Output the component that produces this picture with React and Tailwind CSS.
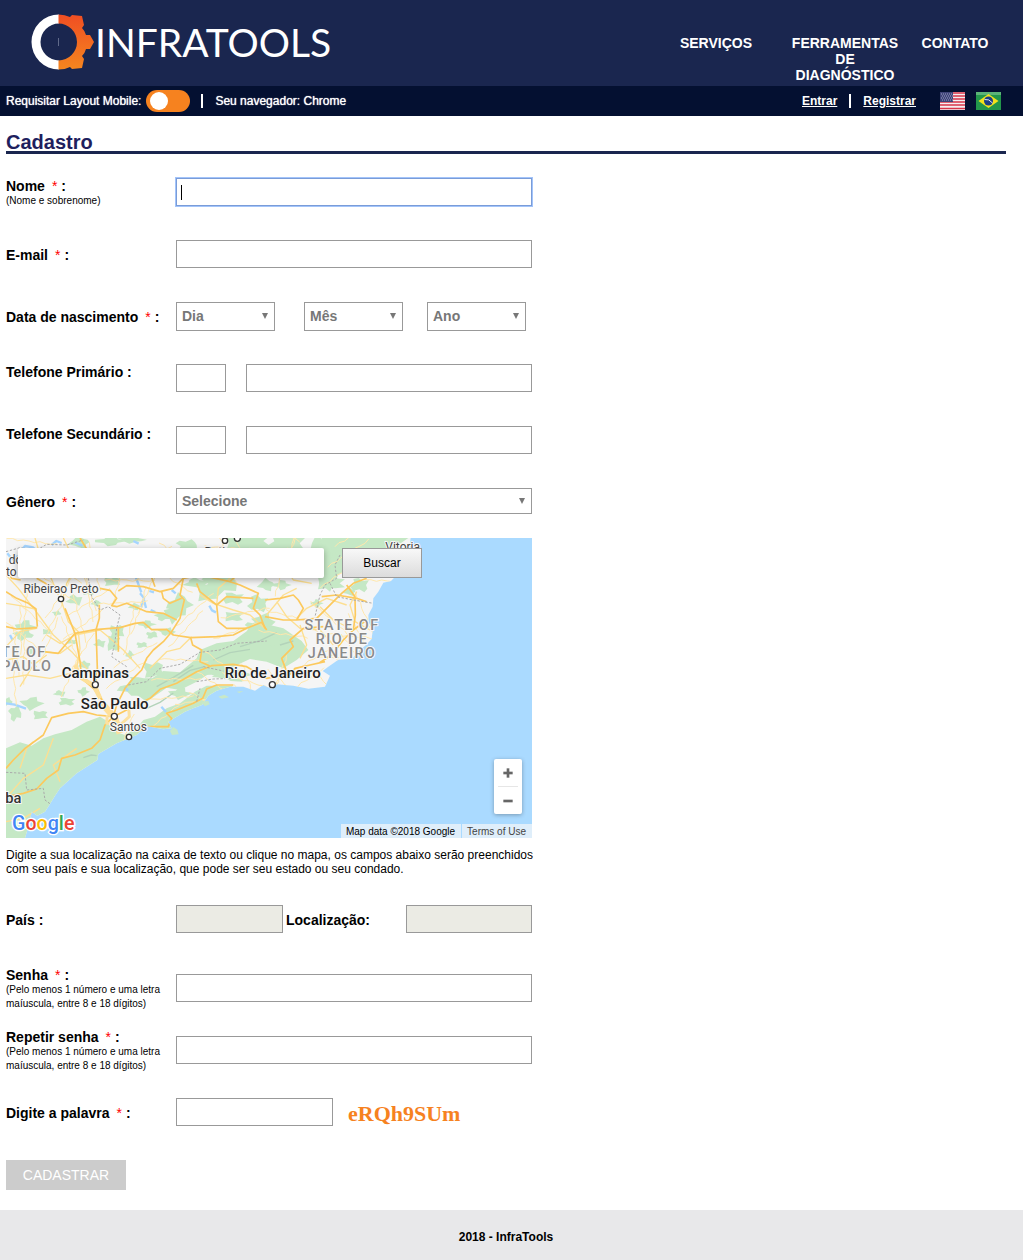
import { Minus, Plus } from "lucide-react";

const FONT = "font-['Liberation_Sans',Arial,sans-serif]";
const FIELD = "h-7 min-w-0 rounded-none border border-[#999] bg-white px-1 text-sm outline-none";

function Logo() {
  return (
    <a href="#inicio" aria-label="InfraTools" className="flex items-center text-white">
      <svg viewBox="0 0 64 56" className="h-14 w-16 shrink-0" aria-hidden="true">
        <defs>
          <linearGradient id="gear" x1="0" y1="0" x2="0" y2="1">
            <stop offset="0" stopColor="#f04e23" />
            <stop offset="1" stopColor="#f6861f" />
          </linearGradient>
        </defs>
        <path d="M28 .5A27.5 27.5 0 0 0 28 55.500V46.500A18.500 18.500 0 0 1 28 9.500Z" fill="#fff" />
        <path
          d="M27.500 .5Q34 .5 39 3L41 1L51 2L53 11L51 14Q54 17 55 21L59 21L63 28L59 35L55 35Q54 39 51 42L53 45L51 54L41 55L39 53Q34 55.500 27.500 55.500V46.500A18.500 18.500 0 0 0 27.500 9.500Z"
          fill="url(#gear)"
        />
        <path d="M27.500 24v8" stroke="#8088a3" strokeWidth=".7" />
      </svg>
      <span className="font-[Lato,sans-serif] text-[39px] leading-none">INFRATOOLS</span>
    </a>
  );
}

function UsFlag() {
  return (
    <svg viewBox="0 0 25 18" className="h-[18px] w-[25px]" aria-hidden="true">
      <path d="M0 0h25v18H0z" fill="#f5eef0" />
      <path d="M0 1h25M0 4h25M0 7h25M0 10h25M0 13h25M0 16.500h25" stroke="#d8344a" strokeWidth="1.500" />
      <path d="M0 0h13v10H0z" fill="#3f4378" />
      <path d="M1 2h11M2 4h11M1 6h11M2 8h11" stroke="#9ea3c4" strokeDasharray="1 1" />
    </svg>
  );
}

function BrFlag() {
  return (
    <svg viewBox="0 0 25 18" className="h-[18px] w-[25px]" aria-hidden="true">
      <path d="M0 0h25v18H0z" fill="#22964b" />
      <path d="M0 0h25v3H0z" fill="#5bb377" />
      <path d="M12.500 2L22.500 9L12.500 16L2.500 9Z" fill="#f4e21b" />
      <circle cx="12.500" cy="9" r="4.500" fill="#1d3f86" />
      <path d="M8.500 7.500Q13 6.500 16.500 11" stroke="#dbe5f0" fill="none" />
    </svg>
  );
}

const forests = [
  [240, 22, 50, 28], [330, 18, 70, 22], [395, 14, 60, 16], [560, 30, 50, 26], [740, 18, 120, 50], [860, 25, 100, 60],
  [960, 60, 70, 90], [1020, 20, 90, 60], [1120, 70, 60, 60], [660, 145, 80, 60], [620, 170, 50, 50], [700, 190, 50, 30],
  [590, 145, 60, 24], [540, 210, 60, 50], [520, 235, 40, 44], [490, 245, 40, 20], [335, 140, 40, 22], [265, 170, 30, 18],
  [225, 195, 40, 24], [290, 205, 26, 14], [75, 275, 44, 30], [70, 300, 46, 24], [350, 290, 36, 34], [340, 325, 32, 40],
  [300, 325, 30, 18], [405, 215, 30, 16], [440, 268, 40, 18], [500, 290, 38, 18], [455, 300, 28, 18], [700, 245, 46, 24],
  [775, 205, 50, 40], [800, 150, 40, 28], [845, 150, 40, 22], [790, 260, 50, 40], [760, 275, 40, 26], [990, 145, 70, 30],
  [1080, 150, 44, 34], [1050, 170, 28, 18], [950, 205, 28, 18], [820, 320, 40, 20], [90, 350, 20, 18], [140, 290, 22, 14],
  [215, 320, 26, 12], [255, 390, 30, 18], [390, 360, 20, 20], [95, 505, 50, 30], [45, 535, 30, 36], [120, 540, 36, 22],
  [200, 500, 40, 20], [180, 475, 30, 14], [400, 460, 70, 34], [540, 475, 50, 26], [20, 500, 26, 20], [460, 405, 50, 40],
  [420, 440, 60, 24], [640, 400, 90, 46], [700, 420, 90, 30], [250, 470, 26, 20], [170, 235, 20, 12], [425, 330, 26, 14],
];

function blob([x, y, w, h], i) {
  const points = [];
  for (let k = 0; k < 11; k += 1) {
    const angle = (k / 11) * Math.PI * 2;
    const r = 0.58 + 0.2 * Math.sin(i * 7.3 + k * 4.1);
    points.push(`${Math.round(x + w * r * Math.cos(angle))},${Math.round(y + h * r * Math.sin(angle))}`);
  }
  return points.join(" ");
}

function lanes() {
  const lines = [];
  for (let i = 0; i < 80; i += 1) {
    let x = 20 + ((i * 197) % 1120);
    let y = 10 + ((i * 113) % 540);
    let angle = i * 2.4;
    let d = `M${x} ${y}`;
    for (let k = 0; k < 9; k += 1) {
      angle += Math.sin(i * 3.7 + k * 2.3) * 0.55;
      x += Math.round(Math.cos(angle) * 17);
      y += Math.round(Math.sin(angle) * 17);
      d += `L${x} ${y}`;
    }
    lines.push(d);
  }
  return lines.join("");
}

const LAND =
  "M18 9H1232L1225 60L1200 110L1173 138L1150 143L1135 170L1120 190L1118 215L1105 240L1106 262L1118 285L1115 312L1098 330L1080 345L1055 372L1015 374L985 395L968 408L990 422L975 455L925 461L880 452L830 448L815 462L790 450L765 467L730 455L690 455L650 467L625 482L606 510L580 520L555 530L505 560L515 580L490 583L440 573L410 600L350 625L295 657L292 675L230 715L180 760L165 782L148 810L135 830L112 842L95 830L88 865L75 909H18Z";

const places = [
  ["Ribeirao Preto", 183, 173, 183, 192, false],
  ["Campinas", 286, 430, 286, 449, true],
  ["Rio de Janeiro", 818, 430, 817, 449, true],
  ["São Paulo", 344, 523, 343, 544, true],
  ["Santos", 385, 588, 387, 606, false],
];

function MapDrawing() {
  return (
    <svg
      viewBox="18 9 1578 900"
      preserveAspectRatio="xMinYMin slice"
      className="block h-full w-full bg-[#aadaff] font-[Roboto,sans-serif]"
      role="img"
      aria-label="Mapa do sudeste do Brasil"
    >
      <defs>
        <clipPath id="land"><path d={LAND} /></clipPath>
      </defs>
      <path d={LAND} fill="#f5f5f5" />
      <g clipPath="url(#land)" fill="none" strokeLinejoin="round">
        <g fill="#c5e8c5">
          <path d="M18 640L60 622L95 632L130 610L165 598L215 585L260 560L300 545L325 560L345 590L375 600L410 580L430 555L465 545L500 520L540 505L585 470L620 452L700 452L640 500L520 620L300 700L120 909H18Z" />
          <path d="M390 465L440 440L490 408L540 412L590 370L600 345L650 325L700 318L745 285L800 268L850 280L905 318L925 345L890 375L850 400L800 380L750 372L690 400L640 408L590 440L540 465L500 458L440 500Z" />
          <path d="M955 15L1030 9L1225 9L1150 60L1100 40L1060 90L1015 120L990 170L965 150L975 90Z" />
          {forests.map((f, i) => <polygon key={i} points={blob(f, i)} />)}
        </g>
        <g stroke="#b3d3ba" strokeWidth="4">
          <path d="M470 455l50-28 60-36M520 440l50-34 40-10M640 375l50-22 60-10M720 335l60-18 50-24M250 668l24-8 16 2M440 520l40-18 40-28M840 330l40-12" />
        </g>
        <g stroke="#a5d5ff" strokeWidth="7">
          <path d="M22 55l14 18 18-10M65 45l10-12 24 4 12 12M155 30l14-12 16 6M225 22l22 10M408 128l8 22 8 22M420 175l12 14-8 28M432 195l6 24M448 168l14 4M515 165l12 10M628 212l8 14 12 6M18 505l26 4 34 12M452 225l14 6M484 515l14 16M400 18l16 8M30 300l8 16M374 455l10 12" />
        </g>
        <path d={lanes()} stroke="#ffe7ac" strokeWidth="3" />
        <g stroke="#fddf91" strokeWidth="4">
          <path d="M18 120L55 160L85 200L105 225L160 300L215 350L260 400L286 445L305 490L340 545M18 205L60 212L105 222M18 335L60 290L110 280M185 200L205 260L235 290L240 340L230 400M190 9L215 60L225 100L200 145L190 185M105 9L120 60L145 110L175 180" />
          <path d="M140 300L180 325L225 300L300 285M300 285L330 310L370 345L420 400M130 350L180 355L215 330M18 430L80 420L150 430L210 415L260 440M60 455L100 390L140 360M18 375L70 365L110 395M650 210L655 160L690 130M575 305L540 340L500 350L450 400M600 180L640 205L700 225L750 240L800 285" />
          <path d="M830 200L860 245L900 280L960 285L1000 330M890 250L920 220L980 190L1040 210M800 240L850 180L890 160M1070 170L1050 210L1065 260L1110 285M900 270L920 330L900 370M845 80L880 135L935 145M1060 285L1000 255L960 215M18 790L70 730L130 690L160 610M60 700L80 640L100 620M180 740L160 690L230 640M18 860L70 850L120 820" />
        </g>
        <g stroke="#fcc95d" strokeWidth="5">
          <path d="M18 170L50 190L85 205L108 222L112 275M18 275L50 282L112 278M62 135L35 130L20 105M110 130L145 150L170 155M300 160L330 166L350 190L335 212L350 215L380 205L440 230L490 235L530 255M355 168L380 152L430 155L480 170L520 160L550 130M240 9L265 50L300 75M300 75L360 80L420 60M550 130L600 120L650 100M485 170L490 190L510 205L545 190" />
          <path d="M130 350L175 355L225 295L285 284L360 278L405 265L430 262L455 284L500 283L520 300L572 308L650 305L700 300L740 280L785 262L800 285M298 210L298 250L288 284L290 340L292 400L286 449M355 278L355 350M550 130L540 180L553 195L540 250L515 290L490 320L460 345L440 370L425 405L400 430L375 460L350 510L340 545" />
          <path d="M340 545L310 500L280 460L245 430L240 380L225 295L195 220M340 545L290 540L250 530L205 535L155 548L130 600L75 640L40 675L18 700M340 545L315 570L300 615L275 640L225 660L185 670L175 705L140 730L110 762L70 775L18 785" />
          <path d="M340 545L390 520L450 490L480 463L530 445L590 410L635 392L700 388L740 395L800 430L850 420L900 410M572 308L578 330L605 345L600 380L630 393M410 590L440 575L505 575L515 550L500 535L530 525L580 505L608 490L620 462L650 450L700 450M795 280L780 240L760 220L775 175L720 150L690 140" />
          <path d="M795 245L850 255L890 255L910 220L895 195L880 180L840 190L795 195M890 255L950 250L1000 200L1025 175L1060 145L1100 130M860 410L845 370L880 335L870 315L910 280L970 275M955 385L995 360L1030 315L1060 285L1066 240L1065 185L1040 150M1060 285L1100 255M860 430L885 400L930 390L975 380M965 185L1010 180L1070 190L1100 200" />
          <path d="M590 145L600 170L650 210L680 185L760 190M650 210L655 260L680 280L740 280M445 100L465 155M600 120L690 140L720 110L790 115" />
        </g>
        <path d="M300 500Q320 520 345 550L360 595" stroke="#ffe09a" strokeWidth="20" />
        <path d="M360 520L385 505L388 545L360 570L320 565L322 540" stroke="#fce1a0" strokeWidth="9" />
        <path d="M225 390L245 430L280 450L300 490" stroke="#fee09a" strokeWidth="12" />
        <g stroke="#aaa" strokeWidth="3" strokeDasharray="7 5">
          <path d="M18 50L60 38L105 48L140 28L200 30L250 15M265 130L275 185L300 225L325 215L360 240L350 280L345 320L335 365L380 395M385 450L440 440L480 400L540 388L600 352L660 345L710 325L800 318M610 395L670 408M590 440L640 432L700 430M1020 60L1005 90L1010 130L975 150L960 180L945 245M990 145L1010 185L1060 195L1120 205M18 712L75 715L80 765L130 760L135 795L155 810M590 500L600 460" />
        </g>
      </g>
      <path d="M510 588l10-12 12 8 4 14-20 2zM603 500l22-2 4 10-14 6zM655 485l18-6 14 8-22 4zM710 470l20-2-12 6z" fill="#c8e8c8" />

      <g stroke="#f8f8f8" strokeWidth="6" strokeLinejoin="round" className="[paint-order:stroke]">
        <g fill="#8a8a8a" fontSize="43" fontWeight="500" className="tracking-widest">
          <text x="1026" y="284" textAnchor="middle">STATE OF</text>
          <text x="1026" y="326" textAnchor="middle">RIO DE</text>
          <text x="1026" y="368" textAnchor="middle">JANEIRO</text>
          <text x="140" y="366" textAnchor="end">TE OF</text>
          <text x="157" y="408" textAnchor="end">PAULO</text>
        </g>
        <g fill="#444" fontSize="36">
          <text x="26" y="87">do</text>
          <text x="18" y="123">to</text>
          <text x="660" y="62" textAnchor="middle">Betim</text>
          <text x="1208" y="48" textAnchor="middle">Vitoria</text>
        </g>
        <text x="16" y="804" fill="#333" fontSize="44" fontWeight="500">ba</text>
        {places.map(([name, x, y, , , major]) => (
          <text key={name} x={x} y={y} textAnchor="middle" fill={major ? "#222" : "#444"} fontSize={major ? 45 : 36} fontWeight={major ? 500 : 400}>
            {name}
          </text>
        ))}
      </g>
      <g fill="#fff" stroke="#333" strokeWidth="4">
        {places.map(([name, , , cx, cy, major]) => <circle key={name} cx={cx} cy={cy} r={major ? 9 : 8} />)}
        <circle cx="675" cy="17" r="8" />
        <circle cx="712" cy="10" r="9" />
      </g>
      <text x="36" y="886" fontSize="59" fontWeight="500" stroke="#fff" strokeWidth="8" className="[paint-order:stroke]">
        <tspan fill="#4285f4">G</tspan><tspan fill="#ea4335">o</tspan><tspan fill="#fbbc05">o</tspan>
        <tspan fill="#4285f4">g</tspan><tspan fill="#34a853">l</tspan><tspan fill="#ea4335">e</tspan>
      </text>
    </svg>
  );
}

function LocationMap() {
  return (
    <div className="relative mt-[7px] h-[300px] w-full overflow-hidden">
      <MapDrawing />
      <input
        type="text"
        aria-label="Buscar localização"
        className="absolute left-3 top-[10px] h-[30px] w-[306px] rounded-[2px] bg-white px-3 text-sm shadow-[0_2px_6px_rgba(0,0,0,0.3)] outline-none"
      />
      <button type="button" className="absolute left-[336px] top-[10px] h-[30px] w-20 border border-[#999] bg-linear-to-b from-[#f8f8f8] to-[#dcdcdc] text-xs text-black">
        Buscar
      </button>
      <div className="absolute bottom-6 right-[10px] flex w-7 flex-col items-center rounded-[2px] bg-white text-[#666] shadow-[0_1px_4px_rgba(0,0,0,0.3)]">
        <button type="button" aria-label="Aumentar zoom" className="flex h-[27px] w-7 items-center justify-center">
          <Plus size={16} strokeWidth={4} strokeLinecap="butt" />
        </button>
        <span className="h-px w-5 bg-[#e6e6e6]" />
        <button type="button" aria-label="Diminuir zoom" className="flex h-[27px] w-7 items-center justify-center">
          <Minus size={16} strokeWidth={4} strokeLinecap="butt" />
        </button>
      </div>
      <div className="absolute bottom-0 right-0 flex h-[14px] gap-px text-[10px] leading-4">
        <span className="bg-[#dfeefa] pl-[5px] pr-[6px] text-black">Map data ©2018 Google</span>
        <a href="#termos" className="bg-[#dfeefa] pl-[5px] pr-[6px] text-[#444]">Terms of Use</a>
      </div>
    </div>
  );
}

function FieldLabel({ htmlFor, children, required, hint, raised }) {
  return (
    <div className={raised ? "w-[170px] shrink-0 pb-3" : "w-[170px] shrink-0 pt-[2px]"}>
      <label htmlFor={htmlFor} className="block text-sm leading-4 font-bold">
        {children}
        {required && <span className="ml-[7px] mr-1 font-normal text-[#ff0000]">*</span>}
        {required ? ":" : " :"}
      </label>
      {hint && <p id={`${htmlFor}-hint`} className="max-w-40 text-[10px] leading-[14px]">{hint}</p>}
    </div>
  );
}

function Row({ children }) {
  return <div className="flex min-h-[62px] items-center">{children}</div>;
}

function Dropdown({ id, label, placeholder, options, size }) {
  return (
    <div className={`relative ${size}`}>
      <select
        id={id}
        aria-label={label}
        defaultValue=""
        className="h-full w-full appearance-none rounded-none border border-[#999] bg-white pl-[5px] pr-5 text-sm font-bold text-[#777] outline-none"
      >
        <option value="">{placeholder}</option>
        {options.map((o) => <option key={o}>{o}</option>)}
      </select>
      <svg viewBox="0 0 6 6" className="pointer-events-none absolute right-[7px] top-1/2 size-[6px] -translate-y-1/2" aria-hidden="true">
        <path d="M0 0h6L3 6Z" fill="#777" />
      </svg>
    </div>
  );
}

const days = Array.from({ length: 31 }, (_, i) => i + 1);
const months = ["Janeiro", "Fevereiro", "Março", "Abril", "Maio", "Junho", "Julho", "Agosto", "Setembro", "Outubro", "Novembro", "Dezembro"];
const years = Array.from({ length: 100 }, (_, i) => 2018 - i);
const passwordHint = "(Pelo menos 1 número e uma letra maíuscula, entre 8 e 18 dígitos)";

export default function App() {
  return (
    <div className={`min-h-screen bg-white text-black ${FONT}`}>
      <header>
        <div className="flex h-[86px] items-start justify-between bg-[#1a264f] pl-[31px] pr-[13px] text-white">
          <div className="pt-[14px]"><Logo /></div>
          <nav className="flex pt-[35px] text-center text-sm leading-4 font-bold">
            <a href="#servicos" className="w-[148px] px-4">SERVIÇOS</a>
            <a href="#ferramentas" className="w-[110px]">FERRAMENTAS DE DIAGNÓSTICO</a>
            <a href="#contato" className="w-[110px]">CONTATO</a>
          </nav>
        </div>
        <div className="flex h-[30px] items-center justify-between bg-[#041031] pl-[6px] pr-[22px] text-xs text-white">
          <div className="flex items-center [text-shadow:0_0_1px_#fff]">
            <label htmlFor="mobile">Requisitar Layout Mobile:</label>
            <input
              id="mobile"
              type="checkbox"
              role="switch"
              className="ml-[5px] flex h-[22px] w-11 appearance-none items-center rounded-full bg-[#f6821f] px-1 before:size-[18px] before:rounded-full before:bg-white checked:justify-end"
            />
            <span className="ml-[11px] mr-3 h-[14px] w-[2px] bg-white" />
            <span>Seu navegador: Chrome</span>
          </div>
          <div className="flex items-center">
            <a href="#entrar" className="font-bold underline">Entrar</a>
            <span className="mx-3 h-[14px] w-[2px] bg-white" />
            <a href="#registrar" className="font-bold underline">Registrar</a>
            <button type="button" aria-label="English" className="ml-6"><UsFlag /></button>
            <button type="button" aria-label="Português" className="ml-[11px]"><BrFlag /></button>
          </div>
        </div>
      </header>

      <main className="pl-[6px] pr-[17px] pt-[17px]">
        <h1 className="border-b-[3px] border-[#1a264f] text-xl leading-[18px] font-bold text-[#1f1f5e]">Cadastro</h1>

        <form className="mt-[7px] max-w-[526px]" onSubmit={(e) => e.preventDefault()}>
          <Row>
            <FieldLabel htmlFor="nome" required hint="(Nome e sobrenome)">Nome</FieldLabel>
            <div className="relative flex-1">
              <input
                id="nome"
                type="text"
                aria-describedby="nome-hint"
                className="peer block h-7 w-full border border-[#7a9cd8] bg-white px-1 text-sm ring-1 ring-[#a3c4fa] outline-none"
              />
              <span className="pointer-events-none absolute left-[5px] top-[7px] h-[15px] w-px bg-black peer-focus:hidden" />
            </div>
          </Row>
          <Row>
            <FieldLabel htmlFor="email" required>E-mail</FieldLabel>
            <input id="email" type="email" className={`${FIELD} flex-1`} />
          </Row>
          <Row>
            <FieldLabel htmlFor="dia" required>Data de nascimento</FieldLabel>
            <div className="flex flex-1">
              <Dropdown id="dia" placeholder="Dia" options={days} size="mr-[29px] h-[29px] w-[99px]" />
              <Dropdown id="mes" label="Mês" placeholder="Mês" options={months} size="mr-6 h-[29px] w-[99px]" />
              <Dropdown id="ano" label="Ano" placeholder="Ano" options={years} size="h-[29px] w-[99px]" />
            </div>
          </Row>
          <Row>
            <FieldLabel htmlFor="tel1" raised>Telefone Primário</FieldLabel>
            <input type="text" aria-label="DDD primário" className={`${FIELD} mr-5 w-[50px]`} />
            <input id="tel1" type="tel" className={`${FIELD} flex-1`} />
          </Row>
          <Row>
            <FieldLabel htmlFor="tel2" raised>Telefone Secundário</FieldLabel>
            <input type="text" aria-label="DDD secundário" className={`${FIELD} mr-5 w-[50px]`} />
            <input id="tel2" type="tel" className={`${FIELD} flex-1`} />
          </Row>
          <div className="flex min-h-[60px] items-center">
            <FieldLabel htmlFor="genero" required>Gênero</FieldLabel>
            <Dropdown id="genero" placeholder="Selecione" options={["Feminino", "Masculino", "Outro"]} size="h-[26px] flex-1" />
          </div>

          <LocationMap />
          <p className="-mr-1 mt-[10px] text-xs leading-[14px]">
            Digite a sua localização na caixa de texto ou clique no mapa, os campos abaixo serão preenchidos com seu país e sua localização, que pode ser seu estado ou seu condado.
          </p>

          <div className="mt-3 mb-[7px]">
            <Row>
              <FieldLabel htmlFor="pais">País</FieldLabel>
              <input id="pais" type="text" readOnly className="h-7 w-[107px] border border-[#999] bg-[#ebebe4] px-1 text-sm" />
              <label htmlFor="local" className="ml-[3px] flex-1 pt-[2px] text-sm leading-4 font-bold">Localização:</label>
              <input id="local" type="text" readOnly className="h-7 w-[126px] border border-[#999] bg-[#ebebe4] px-1 text-sm" />
            </Row>
          </div>
          <Row>
            <FieldLabel htmlFor="senha" required hint={passwordHint}>Senha</FieldLabel>
            <input id="senha" type="password" className={`${FIELD} flex-1`} />
          </Row>
          <Row>
            <FieldLabel htmlFor="repetir" required hint={passwordHint}>Repetir senha</FieldLabel>
            <input id="repetir" type="password" className={`${FIELD} flex-1`} />
          </Row>
          <Row>
            <FieldLabel htmlFor="palavra" required>Digite a palavra</FieldLabel>
            <input id="palavra" type="text" className={`${FIELD} w-[157px]`} />
            <span className="ml-[15px] pt-1 font-['Liberation_Serif',serif] text-[22px] leading-7 font-bold text-[#f6821f]">eRQh9SUm</span>
          </Row>
          <button type="submit" disabled className="mt-[17px] mb-5 block h-[30px] w-[120px] bg-[#ccc] text-sm text-white">CADASTRAR</button>
        </form>
      </main>

      <footer className="bg-[#e8e8ea] pt-[19px] pr-[11px] pb-[15px] text-center text-xs font-bold">2018 - InfraTools</footer>
    </div>
  );
}
